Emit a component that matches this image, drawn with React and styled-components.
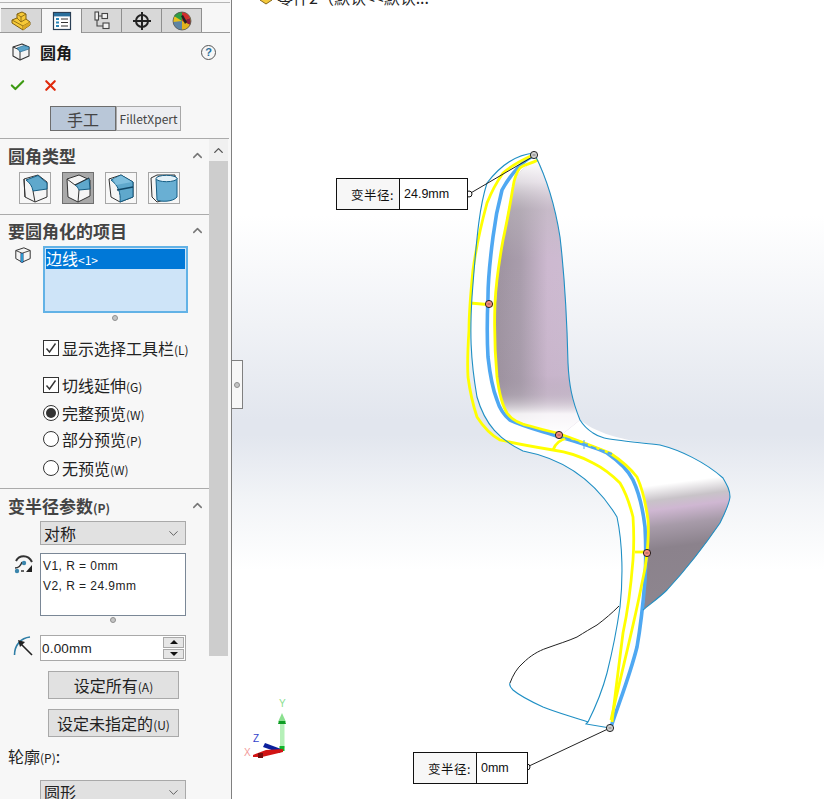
import React from 'react';
import styled, { createGlobalStyle } from 'styled-components';
import { Check, X, ChevronUp, ChevronDown } from 'lucide-react';

const UI_FONT = '"Noto Sans CJK SC", "Liberation Sans", sans-serif';

const GlobalStyle = createGlobalStyle`
  html, body { margin: 0; padding: 0; background: #fff; }
  body { font-family: "Liberation Sans", "Noto Sans CJK SC", sans-serif; overflow: hidden; }
`;

const Screen = styled.div`
  width: 824px;
  height: 799px;
  display: flex;
  overflow: hidden;
`;

/* ---------- left property manager ---------- */

const Panel = styled.aside`
  width: 231px;
  height: 799px;
  flex: none;
  background: #f7f7f7;
  border-right: 1px solid #808080;
  box-sizing: content-box;
  display: flex;
  overflow: hidden;
`;

const PanelBody = styled.div`
  width: 209px;
  flex: none;
  display: flex;
  flex-direction: column;
`;

const PanelRail = styled.div`
  width: 22px;
  flex: none;
  display: flex;
  flex-direction: column;
`;

const TabBar = styled.div`
  margin-top: 2px;
  border-top: 1px solid #b5b5b5;
  padding: 5px 0 0 1px;
  width: 229px;
  height: 25px;
  display: flex;
  align-items: flex-end;
  box-sizing: content-box;
  position: relative;
  flex: none;
  &::after {
    content: '';
    position: absolute;
    left: 0;
    right: 0;
    bottom: 0;
    height: 1px;
    background: #9a9a9a;
  }
`;

const Tab = styled.div`
  width: 41px;
  height: 25px;
  box-sizing: border-box;
  border: 1px solid #8f8f8f;
  border-left-width: ${p => (p.$first ? 0 : 1)}px;
  margin-left: ${p => (p.$first ? 0 : -1)}px;
  border-bottom: ${p => (p.$active ? '0' : '1px solid #8f8f8f')};
  background: ${p => (p.$active ? '#f7f7f7' : '#d8d8d8')};
  display: flex;
  align-items: center;
  justify-content: center;
  position: relative;
  z-index: ${p => (p.$active ? 1 : 0)};
`;

const TitleRow = styled.div`
  height: 38px;
  display: flex;
  align-items: center;
  padding-left: 11px;
  gap: 9px;
  width: 216px;
  box-sizing: border-box;
  flex: none;
`;

const Title = styled.div`
  font: 700 16px ${UI_FONT};
  color: #1a1a1a;
  flex: 1;
`;

const HelpMark = styled.div`
  width: 13px;
  height: 13px;
  border: 1px solid #555;
  border-radius: 50%;
  color: #2a6f9c;
  font: 700 11px/13px "Liberation Sans", sans-serif;
  text-align: center;
  flex: none;
`;

const ActionRow = styled.div`
  height: 28px;
  display: flex;
  align-items: center;
  gap: 16px;
  padding-left: 9px;
  flex: none;
`;

const ModeRow = styled.div`
  display: flex;
  margin: 7px 0 0 50px;
  width: 131px;
  height: 25px;
  flex: none;
`;

const ModeButton = styled.div`
  height: 25px;
  box-sizing: border-box;
  width: ${p => (p.$active ? 66 : 65)}px;
  display: flex;
  align-items: center;
  justify-content: center;
  border: 1px solid ${p => (p.$active ? '#6d6d6d' : '#a8a8a8')};
  background: ${p => (p.$active ? '#b9c7d8' : '#ecedf1')};
  color: #444;
  font: ${p => (p.$active ? '16px' : '12px')} ${UI_FONT};
`;

const Group = styled.section`
  border-top: 1px solid #ababab;
  width: ${p => p.$wide || 209}px;
  display: flex;
  flex-direction: column;
  margin-top: ${p => p.$gap || 0}px;
  flex: none;
`;

const GroupHead = styled.div`
  width: 209px;
  box-sizing: border-box;
  height: ${p => p.$h || 32}px;
  display: flex;
  align-items: center;
  justify-content: space-between;
  padding: 0 4px 0 8px;
  font: 700 17px ${UI_FONT};
  color: #444;
  white-space: nowrap;
`;

const GroupSmall = styled.span`
  font-size: 12px;
`;

const TypeRow = styled.div`
  display: flex;
  gap: 11px;
  padding-left: 19px;
`;

const TypeButton = styled.div`
  width: 32px;
  height: 32px;
  box-sizing: border-box;
  border: 1px solid ${p => (p.$active ? '#6f6f6f' : '#a6a6a6')};
  background: ${p => (p.$active ? '#a9a9a9' : '#f7f7f7')};
  display: flex;
  align-items: center;
  justify-content: center;
`;

const SelectRow = styled.div`
  display: flex;
  padding-left: 14px;
  gap: 11px;
`;

const EdgeList = styled.div`
  width: 145px;
  height: 67px;
  box-sizing: border-box;
  border: 2px solid #62b2e6;
  background: #cee4f8;
  padding: 1px;
  flex: none;
`;

const EdgeItem = styled.div`
  height: 20px;
  background: #0078d7;
  color: #fff;
  font: 16px/18px ${UI_FONT};
  white-space: nowrap;
`;

const Tiny = styled.span`
  font-size: 12px;
`;

const Sash = styled.div`
  width: 4px;
  height: 4px;
  border-radius: 50%;
  background: #c4c4c4;
  border: 1px solid #8f8f8f;
  box-sizing: content-box;
  margin: ${p => p.$top || 0}px 0 0 ${p => p.$left || 0}px;
  flex: none;
`;

const OptionList = styled.div`
  display: flex;
  flex-direction: column;
  padding-left: 43px;
`;

const Option = styled.label`
  height: ${p => p.$h || 28}px;
  margin-top: ${p => p.$top || 0}px;
  display: flex;
  align-items: center;
  gap: 3px;
  font: 16px ${UI_FONT};
  color: #222;
  white-space: nowrap;
`;

const CheckBox = styled.span`
  width: 16px;
  height: 16px;
  box-sizing: border-box;
  border: 1px solid #333;
  background: #fff;
  display: flex;
  align-items: center;
  justify-content: center;
  flex: none;
`;

const Radio = styled.span`
  width: 16px;
  height: 16px;
  box-sizing: border-box;
  border: 1px solid #333;
  border-radius: 50%;
  background: #fff;
  flex: none;
  display: flex;
  align-items: center;
  justify-content: center;
  &::after {
    content: '';
    width: 10px;
    height: 10px;
    border-radius: 50%;
    background: ${p => (p.$on ? '#333' : 'transparent')};
  }
`;

const Combo = styled.div`
  width: 146px;
  height: 24px;
  box-sizing: border-box;
  margin-left: 40px;
  margin-top: ${p => p.$top || 0}px;
  border: 1px solid #a9a9a9;
  background: #e1e1e1;
  display: flex;
  align-items: center;
  justify-content: space-between;
  padding: 0 4px 0 3px;
  font: 16px ${UI_FONT};
  color: #222;
  flex: none;
`;

const ParamRow = styled.div`
  display: flex;
  margin-top: ${p => p.$top || 0}px;
  padding-left: 13px;
  gap: 5px;
  flex: none;
`;

const ListBox = styled.div`
  width: 146px;
  height: 63px;
  box-sizing: border-box;
  border: 1px solid #7a8796;
  background: #fff;
  padding: 2px 2px;
  font: 12px/20px "Liberation Sans", sans-serif;
  letter-spacing: 0.45px;
  color: #222;
`;

const SpinBox = styled.div`
  width: 146px;
  height: 26px;
  box-sizing: border-box;
  border: 1px solid #a9a9a9;
  background: #fff;
  display: flex;
  align-items: center;
  padding-left: 1px;
  font: 13.5px "Liberation Sans", sans-serif;
  letter-spacing: 0.2px;
  color: #222;
`;

const SpinText = styled.span`
  flex: 1;
`;

const SpinButtons = styled.div`
  width: 21px;
  height: 22px;
  margin-right: 1px;
  display: flex;
  flex-direction: column;
  gap: 1px;
`;

const SpinButton = styled.div`
  flex: 1;
  background: #e6e6e6;
  border: 1px solid #a9a9a9;
  display: flex;
  align-items: center;
  justify-content: center;
  &::after {
    content: '';
    border-left: 4px solid transparent;
    border-right: 4px solid transparent;
    ${p => (p.$down ? 'border-top: 4px solid #111;' : 'border-bottom: 4px solid #111;')}
  }
`;

const PushButton = styled.div`
  width: 131px;
  height: 28px;
  box-sizing: border-box;
  margin: ${p => p.$top || 0}px 0 0 48px;
  border: 1px solid #a9a9a9;
  background: #e1e1e1;
  display: flex;
  align-items: center;
  justify-content: center;
  font: 16px ${UI_FONT};
  color: #222;
  white-space: nowrap;
  flex: none;
`;

const FieldLabel = styled.div`
  font: 16px ${UI_FONT};
  color: #222;
  padding-left: 8px;
  margin-top: 8px;
  height: 22px;
  line-height: 22px;
  white-space: nowrap;
  flex: none;
`;

const ScrollCap = styled.div`
  height: 22px;
  background: #f0f0f0;
  display: flex;
  align-items: center;
  justify-content: center;
  margin-top: 139px;
  width: 19px;
  flex: none;
`;

const ScrollThumb = styled.div`
  width: 19px;
  height: 495px;
  background: #cdcdcd;
  flex: none;
`;

/* ---------- right model viewport ---------- */

const Viewport = styled.main`
  position: relative;
  flex: 1;
  height: 799px;
  overflow: hidden;
  background: linear-gradient(
    to bottom,
    #ffffff 0,
    #ffffff 215px,
    #f0f2f6 325px,
    #e2e6ee 420px,
    #e2e6ee 435px,
    #f2f4f7 500px,
    #ffffff 570px
  );
`;

const DocTitle = styled.div`
  position: absolute;
  left: 45px;
  top: -15px;
  font: 16px/24px ${UI_FONT};
  color: #222;
  white-space: nowrap;
`;

const DocGlyph = styled.svg`
  position: absolute;
  left: 27px;
  top: -5px;
`;

const SashTab = styled.div`
  position: absolute;
  left: 0;
  top: 360px;
  width: 11px;
  height: 49px;
  box-sizing: border-box;
  background: #f7f7f7;
  border: 1px solid #808080;
  border-left: 0;
  display: flex;
  align-items: center;
  justify-content: center;
`;

const ModelCanvas = styled.svg`
  position: absolute;
  left: -232px;
  top: 0;
  width: 824px;
  height: 799px;
`;

const Callout = styled.div`
  position: absolute;
  left: ${p => p.$x - 232}px;
  top: ${p => p.$y}px;
  display: flex;
  height: 32px;
  box-sizing: border-box;
  border: 1px solid #111;
  background: #fff;
  color: #111;
`;

const CalloutLabel = styled.div`
  width: ${p => p.$w}px;
  background: #f7f7f7;
  border-right: 1px solid #111;
  display: flex;
  align-items: center;
  justify-content: flex-end;
  padding-right: 5px;
  box-sizing: border-box;
  font: 12.5px ${UI_FONT};
  letter-spacing: 0.5px;
  white-space: nowrap;
`;

const CalloutValue = styled.div`
  width: ${p => p.$w}px;
  display: flex;
  align-items: center;
  padding-left: 4px;
  box-sizing: border-box;
  font: 12.5px "Liberation Sans", sans-serif;
`;

/* ---------- icons ---------- */

const CubeIcon = ({ size = 20, mark = 'top' }) => (
  <svg width={size} height={size} viewBox="0 0 20 20">
    <path d="M2 5 L11 2 L18 5 L18 14 L9 18 L2 14 Z" fill="#f4f4f4" stroke="#333" strokeWidth="1.1" strokeLinejoin="round" />
    <path d="M2 5 L9 8 L18 5 M9 8 L9 18" fill="none" stroke="#333" strokeWidth="1" />
    {mark === 'top' && <path d="M6 6 L13 3.5 L18 5 L18 7 L9 10 Z" fill="#5ba3c9" stroke="#1e5f85" strokeWidth="0.6" />}
    {mark === 'edge' && <rect x="7.6" y="8" width="2.6" height="10" fill="#2b9bd0" stroke="#115" strokeWidth="0.4" />}
  </svg>
);

const PartIcon = () => (
  <svg width="20" height="20" viewBox="0 0 20 20">
    <path d="M1 9 L6 7 L6 3 L11 1 L15 3 L15 8 L19 11 L19 14 L12 19 L1 12 Z" fill="#f6c937" stroke="#80600f" strokeWidth="1" strokeLinejoin="round" />
    <path d="M6 3 L10 6 L15 3 M10 6 L10 11 L6 7 M10 11 L15 8 M1 9 L12 15 L19 11 M12 15 L12 19" fill="none" stroke="#8a6a14" strokeWidth="0.9" />
    <path d="M12 15 L19 11 L19 14 L12 19 Z" fill="#dba824" />
  </svg>
);

const PropertyIcon = () => (
  <svg width="20" height="20" viewBox="0 0 20 20">
    <rect x="1.5" y="1.5" width="17" height="17" fill="#fff" stroke="#2a3f55" strokeWidth="1.2" />
    <rect x="2" y="2" width="16" height="3.4" fill="#2a6f9c" />
    <path d="M4 7h3v2H4zM4 10.5h3v2H4zM4 14h3v2H4z" fill="#2a86b8" />
    <path d="M9 8h7M9 11.5h7M9 15h7" stroke="#333" strokeWidth="1.2" />
  </svg>
);

const ConfigIcon = () => (
  <svg width="20" height="20" viewBox="0 0 20 20" fill="#f2f2f2" stroke="#444" strokeWidth="1.1">
    <path d="M5 9 V15 H11 M5 5 H10" fill="none" />
    <rect x="3" y="1" width="3.5" height="8" />
    <rect x="10" y="2.5" width="5.5" height="5" />
    <rect x="11" y="12" width="6" height="5.5" />
  </svg>
);

const CrossIcon = () => (
  <svg width="20" height="20" viewBox="0 0 20 20" fill="none" stroke="#222">
    <circle cx="10" cy="10" r="6" strokeWidth="2" />
    <path d="M10 1 V19 M1 10 H19" strokeWidth="2" />
  </svg>
);

const AppearanceIcon = () => (
  <svg width="20" height="20" viewBox="0 0 20 20">
    <circle cx="10" cy="10" r="9" fill="#e9c11d" />
    <path d="M10 10 L2 5 A9 9 0 0 1 10 1 Z" fill="#2f9e44" />
    <path d="M10 10 L10 1 A9 9 0 0 1 18 7 Z" fill="#d22d2d" />
    <path d="M10 10 L18 7 A9 9 0 0 1 18 14 Z" fill="#8c1d3c" />
    <path d="M10 10 L18 14 A9 9 0 0 1 10 19 Z" fill="#e3b21c" />
    <path d="M10 10 L1 11 A9 9 0 0 0 10 19 Z" fill="#2f6fd0" opacity="0.75" />
    <path d="M9 5 L13 13 L15 11 L11 4 Z" fill="#222" />
    <circle cx="10" cy="10" r="9" fill="none" stroke="#555" strokeWidth="0.8" />
  </svg>
);

/* four small fillet type pictures, 30 x 30 units */
const FilletType = ({ kind }) => (
  <svg width="30" height="30" viewBox="0 0 30 30">
    {kind === 0 && (
      <>
        <path d="M4 6 L18 2 L27 9 L27 24 L15 29 L5 24 Z" fill="#f5f5f5" stroke="#333" />
        <path d="M6 7 L18 2.5 L27 10 L27 16 L13 18 C12 13 10 10 6 7 Z" fill="#5fa8cc" stroke="#155d84" />
        <path d="M13 18 L15 29 M5 24 L4 6" fill="none" stroke="#333" />
      </>
    )}
    {kind === 1 && (
      <>
        <path d="M4 6 L16 2 L27 7 L27 23 L15 29 L5 24 Z" fill="#f5f5f5" stroke="#333" />
        <path d="M12 12 L26 5 L27 16 L16 17 C15 15 14 13 12 12 Z" fill="#5fa8cc" stroke="#155d84" />
        <path d="M4 6 L12 12 L26 5 M16 17 L15 29" fill="none" stroke="#333" />
      </>
    )}
    {kind === 2 && (
      <>
        <path d="M3 6 L15 2 L27 9 L27 24 L14 29 L5 24 Z" fill="#f5f5f5" stroke="#333" />
        <path d="M5 7 L15 2 L27 9 L27 24 L14 29 C15 20 12 12 5 7 Z" fill="#5fa8cc" stroke="#155d84" />
        <path d="M11 17 L27 14" stroke="#0f4666" strokeWidth="1.4" />
        <path d="M7 6 L15 2.5 L26 9 L10 12 Z" fill="#7fbfde" />
      </>
    )}
    {kind === 3 && (
      <>
        <path d="M2 5 L8 2 L26 2 L27 24 L8 29 L3 24 Z" fill="#f5f5f5" stroke="#333" />
        <path d="M7 6 C12 2 24 2 28 5 L28 24 C24 29 12 29 8 27 Z" fill="#69afd3" stroke="#155d84" />
        <ellipse cx="17.5" cy="5.5" rx="10.5" ry="3.2" fill="#e4f1f8" stroke="#155d84" />
      </>
    )}
  </svg>
);

const VertexIcon = () => (
  <svg width="22" height="24" viewBox="0 0 22 24" fill="none">
    <path d="M3 8 C6 2 15 1 19 9" stroke="#333" strokeWidth="2" />
    <path d="M2 15 C6 15 8 12 9 9" stroke="#333" strokeWidth="1.4" />
    <circle cx="4" cy="18" r="2.2" fill="#3b86ad" />
    <circle cx="11" cy="10" r="2.2" fill="#3b86ad" />
    <path d="M13 19 L19 12 L19 19 Z" fill="#222" />
    <path d="M8 18h3" stroke="#333" strokeWidth="1.5" />
  </svg>
);

const RadiusIcon = () => (
  <svg width="22" height="22" viewBox="0 0 22 22" fill="none">
    <path d="M1.5 20 C1.5 10 8 3 17 2" stroke="#2f7ea6" strokeWidth="1.6" />
    <path d="M19 20 L7 8" stroke="#222" strokeWidth="1.6" />
    <path d="M5 5 L12 7 L7 12 Z" fill="#222" />
  </svg>
);

const TickMark = () => (
  <svg width="12" height="12" viewBox="0 0 12 12" fill="none">
    <path d="M1.5 6.5 L4.5 10 L10.5 1.5" stroke="#333" strokeWidth="1.4" />
  </svg>
);

/* ---------- model ---------- */

const Handle = ({ x, y, fill }) => (
  <g>
    <circle cx={x} cy={y} r="3.6" fill={fill} stroke="#111" strokeWidth="0.9" />
    <path d={`M${x - 1.5} ${y}h3`} stroke="#444" strokeWidth="0.6" />
  </g>
);

const BACK_FACE =
  'M538 160 C545 175 555 205 560 237 C565 280 567 320 568 363 C569 385 572 400 580 420 L560 436 L510 420 C500 405 496 385 495 340 C495 300 498 270 503 240 C506 220 510 200 513 187 C516 172 525 166 538 160 Z';

const Model = () => (
  <ModelCanvas viewBox="0 0 824 799">
    <defs>
      <linearGradient id="backFace" x1="0" x2="1" y1="0" y2="0">
        <stop offset="0" stopColor="#9d929f" />
        <stop offset="0.3" stopColor="#a99dac" />
        <stop offset="0.62" stopColor="#cdb9d0" />
        <stop offset="1" stopColor="#cdbcd2" />
      </linearGradient>
      <linearGradient id="backFade" x1="0" x2="0" y1="0" y2="1">
        <stop offset="0" stopColor="#ffffff" stopOpacity="1" />
        <stop offset="0.08" stopColor="#f4f2f4" stopOpacity="0.75" />
        <stop offset="0.18" stopColor="#c0bcc0" stopOpacity="0.45" />
        <stop offset="0.36" stopColor="#c0bcc0" stopOpacity="0" />
        <stop offset="0.78" stopColor="#8f8592" stopOpacity="0.08" />
        <stop offset="0.85" stopColor="#b5aeb7" stopOpacity="0.35" />
        <stop offset="0.92" stopColor="#ffffff" stopOpacity="0.85" />
        <stop offset="1" stopColor="#ffffff" stopOpacity="1" />
      </linearGradient>
      <linearGradient id="seatFace" gradientUnits="userSpaceOnUse" x1="672" y1="455" x2="690" y2="592">
        <stop offset="0" stopColor="#ffffff" />
        <stop offset="0.2" stopColor="#ffffff" />
        <stop offset="0.31" stopColor="#c8c3c8" />
        <stop offset="0.38" stopColor="#cfb7d2" />
        <stop offset="0.5" stopColor="#a79ba9" />
        <stop offset="0.66" stopColor="#8b828c" />
        <stop offset="1" stopColor="#8d858e" />
      </linearGradient>
    </defs>

    {/* solid white body */}
    <path
      d="M535 153 C520 154 503 162 487 183 C480 205 477 230 472 297 C470 330 470 357 477 397 C485 425 500 440 523 451 C560 458 593 477 617 517 C623 545 623 580 620 607 L588 725 L610 728 L643 610 C667 590 693 560 720 523 C728 510 730 505 730 497 C723 478 700 460 660 445 C630 441 600 436 580 420 C572 400 568 385 568 363 C567 320 565 280 560 237 C555 205 545 175 535 155 Z"
      fill="#fff"
    />

    {/* back face */}
    <path d={BACK_FACE} fill="url(#backFace)" />
    <path d={BACK_FACE} fill="url(#backFade)" />

    {/* seat face */}
    <path
      d="M610 453 L617 440 C630 442 645 443 660 445 C680 450 705 462 723 478 C727 485 730 490 730 497 C729 505 725 513 720 523 C705 545 690 565 667 590 C660 597 650 604 643 610 C645 600 645 590 645 580 C648 560 649 540 648 520 C645 500 640 485 637 477 C630 465 620 458 610 453 Z"
      fill="url(#seatFace)"
    />

    {/* blue selected edge */}
    <path
      d="M534 156 C525 158 510 175 502 190 C498 205 495 220 493 237 C490 260 488 280 488 297 C487 320 487 340 488 357 C490 375 493 390 497 400 C500 410 505 416 510 420 C525 427 542 431 560 437 C580 443 595 447 607 453 C620 462 628 470 633 480 C640 495 643 510 645 527 C646 545 646 562 645 580 C643 605 640 630 637 647 C630 675 620 700 611 727"
      fill="none"
      stroke="#4fa8f2"
      strokeWidth="3.6"
    />

    {/* yellow preview curves */}
    <g fill="none" stroke="#ffff00" strokeWidth="2.8">
      <path d="M538 160 C530 164 523 165 520 168 C516 173 514 180 513 187 C510 205 507 222 503 240 C499 262 496 283 495 303 C494 330 495 355 497 377 C499 392 502 405 507 413 C512 420 520 424 530 426 C540 429 548 431 557 433 C580 441 595 447 610 453 C622 461 630 468 637 477 C643 490 646 505 648 520 C649 532 648 543 647 553 C646 565 644 575 642 583 C634 625 622 670 611 720" />
      <path d="M533 155 C522 160 512 165 503 173 C496 183 491 193 487 203 C481 225 476 248 473 270 C471 290 469 310 469 330 C468 345 467 360 468 377 C470 392 473 405 477 417 C484 428 491 435 500 440 C518 444 535 447 553 450 C568 452 582 457 593 463 C605 469 613 476 620 483 C626 493 630 505 633 517 C634 532 634 546 633 560 C631 585 628 610 623 633 C619 665 615 695 612 722" />
      <path d="M470 303 L493 305" />
      <path d="M553 450 C555 444 559 440 567 438" />
      <path d="M635 552 L645 552" />
    </g>
    <path d="M565 438 L612 454" fill="none" stroke="#4fa8f2" strokeWidth="2" strokeDasharray="6 3" />

    {/* thin model edges */}
    <g fill="none" stroke="#1f8fc4" strokeWidth="1.1">
      <path d="M535 153 C520 154 503 162 487 183 C480 205 477 230 472 297 C470 330 470 357 477 397 C485 425 500 440 523 451 C560 458 593 477 617 517 C623 545 623 580 620 607 C616 635 612 653 607 673 C602 692 596 706 588 722 L586 724 L610 728" />
      <path d="M535 155 C545 175 555 205 560 237 C565 280 567 320 568 363 C569 385 572 400 580 420 C585 428 590 431 593 433 C600 438 608 439 617 440 C630 442 645 443 660 445 C680 450 705 462 723 478 C727 485 730 490 730 497 C729 505 725 513 720 523 C705 545 690 565 667 590 C660 597 650 604 643 610" />
      <path d="M588 722 C570 716 555 712 543 707 C530 701 520 696 513 690 C510 687 509 685 510 683" />
    </g>
    <path d="M510 683 C513 675 517 668 523 663 C530 656 538 651 547 648 C558 644 568 641 577 637 C585 632 590 629 597 625 C605 619 612 613 619 606" fill="none" stroke="#222" strokeWidth="1" />

    {/* leader lines */}
    <path d="M469 194 L534 156 M527 767 L610 728" stroke="#222" strokeWidth="1" fill="none" />
    <path d="M584 440 v9 M580 444 h8" stroke="#4fa8f2" strokeWidth="1" />
    <circle cx="469" cy="194" r="3" fill="#fff" stroke="#111" />
    <circle cx="527" cy="767" r="3" fill="#fff" stroke="#111" />
    <Handle x={534} y={155} fill="#cfcfcf" />
    <Handle x={489} y={304} fill="#f78d80" />
    <Handle x={559} y={435} fill="#f78d80" />
    <Handle x={647} y={553} fill="#f78d80" />
    <Handle x={610} y={728} fill="#cfcfcf" />

    {/* triad */}
    <g>
      <path d="M282 713 L278 722 H286 Z" fill="#8be08f" />
      <rect x="280" y="722" width="4.5" height="26" fill="#b5f0b8" />
      <path d="M278 724 h8 l-1 -3 h-6 Z" fill="#0f9d25" />
      <path d="M279.5 746 h5 v5 h-5 Z" fill="#11b52a" />
      <path d="M265 743 L281 749 L280 753 L263 747 Z" fill="#0b1f9c" />
      <path d="M253 755 L266 750 L283 749 L283 752 L262 757 L253 757 Z" fill="#d21414" />
      <rect x="258" y="753" width="5" height="5" fill="#7a0d0d" />
      <text x="279" y="707" fontSize="10" fill="#8be08f" fontFamily="Liberation Sans, sans-serif">Y</text>
      <text x="253" y="742" fontSize="10" fill="#3344cc" fontFamily="Liberation Sans, sans-serif">Z</text>
      <text x="244" y="756" fontSize="10" fill="#f29a9a" fontFamily="Liberation Sans, sans-serif">X</text>
    </g>
  </ModelCanvas>
);

const tabIcons = [PartIcon, PropertyIcon, ConfigIcon, CrossIcon, AppearanceIcon];

const Chevron = () => <ChevronUp size={15} strokeWidth={2.4} color="#777" />;

export default function App() {
  return (
    <Screen>
      <GlobalStyle />
      <Panel>
        <PanelBody>
          <TabBar>
            {tabIcons.map((Icon, i) => (
              <Tab key={i} $first={i === 0} $active={i === 1}>
                <Icon />
              </Tab>
            ))}
          </TabBar>
          <TitleRow>
            <CubeIcon size={20} />
            <Title>圆角</Title>
            <HelpMark>?</HelpMark>
          </TitleRow>
          <ActionRow>
            <Check size={17} strokeWidth={3} color="#3d9a12" />
            <X size={17} strokeWidth={3} color="#e02a0c" />
          </ActionRow>
          <ModeRow>
            <ModeButton $active>手工</ModeButton>
            <ModeButton>FilletXpert</ModeButton>
          </ModeRow>

          <Group $gap={7} $wide={229}>
            <GroupHead $h={33}>
              圆角类型
              <Chevron />
            </GroupHead>
            <TypeRow>
              {[0, 1, 2, 3].map(k => (
                <TypeButton key={k} $active={k === 1}>
                  <FilletType kind={k} />
                </TypeButton>
              ))}
            </TypeRow>
          </Group>

          <Group $gap={10}>
            <GroupHead $h={31}>
              要圆角化的项目
              <Chevron />
            </GroupHead>
            <SelectRow>
              <CubeIcon size={18} mark="edge" />
              <EdgeList>
                <EdgeItem>
                  边线<Tiny>&lt;1&gt;</Tiny>
                </EdgeItem>
              </EdgeList>
            </SelectRow>
            <Sash $top={2} $left={112} />
            <OptionList>
              <Option $top={13} $h={28}>
                <CheckBox>
                  <TickMark />
                </CheckBox>
                <span>
                  显示选择工具栏<Tiny>(L)</Tiny>
                </span>
              </Option>
              <Option $top={9} $h={28}>
                <CheckBox>
                  <TickMark />
                </CheckBox>
                <span>
                  切线延伸<Tiny>(G)</Tiny>
                </span>
              </Option>
              <Option $h={27}>
                <Radio $on />
                <span>
                  完整预览<Tiny>(W)</Tiny>
                </span>
              </Option>
              <Option $h={26}>
                <Radio />
                <span>
                  部分预览<Tiny>(P)</Tiny>
                </span>
              </Option>
              <Option $h={32}>
                <Radio />
                <span>
                  无预览<Tiny>(W)</Tiny>
                </span>
              </Option>
            </OptionList>
          </Group>

          <Group $gap={4}>
            <GroupHead $h={32}>
              <span>
                变半径参数<GroupSmall>(P)</GroupSmall>
              </span>
              <Chevron />
            </GroupHead>
            <Combo>
              对称
              <ChevronDown size={15} strokeWidth={1.3} color="#444" />
            </Combo>
            <ParamRow $top={8}>
              <VertexIcon />
              <ListBox>
                V1, R = 0mm
                <br />
                V2, R = 24.9mm
              </ListBox>
            </ParamRow>
            <Sash $top={1} $left={110} />
            <ParamRow $top={12}>
              <RadiusIcon />
              <SpinBox>
                <SpinText>0.00mm</SpinText>
                <SpinButtons>
                  <SpinButton />
                  <SpinButton $down />
                </SpinButtons>
              </SpinBox>
            </ParamRow>
            <PushButton $top={10}>
              <span>
                设定所有<Tiny>(A)</Tiny>
              </span>
            </PushButton>
            <PushButton $top={10}>
              <span>
                设定未指定的<Tiny>(U)</Tiny>
              </span>
            </PushButton>
            <FieldLabel>
              轮廓<Tiny>(P)</Tiny>:
            </FieldLabel>
            <Combo $top={13}>
              圆形
              <ChevronDown size={15} strokeWidth={1.3} color="#444" />
            </Combo>
          </Group>
        </PanelBody>
        <PanelRail>
          <ScrollCap>
            <ChevronUp size={15} strokeWidth={2.2} color="#555" />
          </ScrollCap>
          <ScrollThumb />
        </PanelRail>
      </Panel>

      <Viewport>
        <DocGlyph width="14" height="12" viewBox="0 0 14 12">
          <path d="M1 5 L7 1 L13 5 L7 9 Z" fill="#f4c93c" stroke="#7a5a10" strokeWidth="0.9" />
        </DocGlyph>
        <DocTitle>零件2（默认&lt;&lt;默认...</DocTitle>
        <Model />
        <SashTab>
          <Sash />
        </SashTab>
        <Callout $x={336} $y={178}>
          <CalloutLabel $w={63}>变半径:</CalloutLabel>
          <CalloutValue $w={67}>24.9mm</CalloutValue>
        </Callout>
        <Callout $x={413} $y={752}>
          <CalloutLabel $w={63}>变半径:</CalloutLabel>
          <CalloutValue $w={50}>0mm</CalloutValue>
        </Callout>
      </Viewport>
    </Screen>
  );
}
